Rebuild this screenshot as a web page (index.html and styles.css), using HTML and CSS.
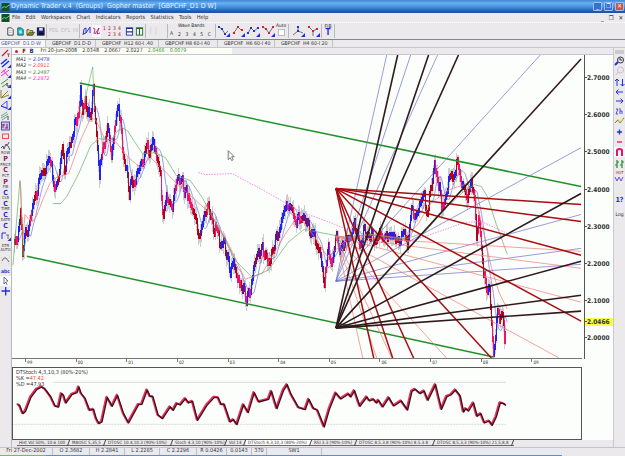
FILE: index.html
```
<!DOCTYPE html>
<html lang="en">
<head>
  <meta charset="UTF-8">
  <title>Dynamic Trader v.4</title>
  <link rel="stylesheet" href="styles.css">
</head>
<body>
  <div class="titlebar">
    <svg class="logo" viewBox="0 0 9 9"><rect width="9" height="9" fill="#12502c"/><path d="M0 6L3 4L5 5L9 2" stroke="#7fe06a" fill="none"/></svg>
    <span class="title">Dynamic Trader v.4 &nbsp;(Groups) &nbsp;Gopher master &nbsp;[GBPCHF_D1 D W]</span>
    <div class="win-buttons">
      <span class="win">_</span><span class="win">❐</span><span class="win win-close">✕</span>
    </div>
  </div>

  <div class="menubar">
    <svg class="logo" viewBox="0 0 9 9"><rect width="9" height="9" fill="#12502c"/><path d="M0 6L3 4L5 5L9 2" stroke="#7fe06a" fill="none"/></svg>
    <nav class="menu">
      <span>File</span><span>Edit</span><span>Workspaces</span><span>Chart</span><span>Indicators</span><span>Reports</span><span>Statistics</span><span>Tools</span><span>Help</span>
    </nav>
    <div class="mdi-buttons"><span>_</span><span>❐</span><span>✕</span></div>
  </div>

  <div class="toolbar">
    <div class="group g-file">
      <svg viewBox="0 0 9 10"><path d="M1.5 1H5.500L7.500 3V9H1.500Z" fill="#fff" stroke="#333"/><path d="M3 4H6M3 6H6" stroke="#777" stroke-width=".6"/></svg>
      <svg viewBox="0 0 9 10"><path d="M1.500 1H5.500L7.500 3V9H1.500Z" fill="#19c5d5" stroke="#155"/><path d="M3 4L4 7L5 4L6 7" stroke="#fff" fill="none" stroke-width=".7"/></svg>
      <svg viewBox="0 0 9 10"><path d="M.5 9V3H3L4 4H7V9Z" fill="#dedc58" stroke="#333" stroke-width=".8"/><path d="M1 9L3 6H9L7 9Z" fill="#8b8a25" stroke="#222" stroke-width=".6"/></svg>
      <svg viewBox="0 0 9 10"><rect x="1" y="1" width="7.500" height="8" fill="#171c91" stroke="#112"/><rect x="3" y="1" width="4" height="3" fill="#dde"/><rect x="3" y="6" width="4" height="3" fill="#111"/></svg>
    </div>
    <div class="group g-text">PDL&ensp;DFL&ensp;HI</div>
    <div class="group g-pct">
      <svg viewBox="0 0 9 12"><path d="M1 10L2 4L4 3V8L1 9M4 8L8 2V8" stroke="#2434df" fill="none"/></svg>
      <svg class="pressed" viewBox="0 0 9 12"><path d="M1 3L3 4L2 9M3 9L7 3L5 9L8 8" stroke="#d02688" fill="none"/></svg>
    </div>
    <div class="counts"><span>1</span><span>2</span><span>3</span><span>4</span><span></span><span>2</span><span>3</span><span>4</span></div>
    <div class="group g-win">
      <svg viewBox="0 0 9 10"><rect x="1" y="1" width="7" height="8" fill="#fff" stroke="#1c2f9b"/><path d="M1 1.500H8M1 5.500H8" stroke="#1c2f9b" stroke-width="1.300"/></svg>
      <svg viewBox="0 0 9 10"><rect x="1" y="1" width="7" height="8" fill="#fff" stroke="#176a2c"/><path d="M1 1.500H8M4.500 1V9" stroke="#176a2c" stroke-width="1.300"/></svg>
    </div>
    <div class="group g-off">⌠&ensp;⌡</div>
    <div class="waves">
      <div class="waves-a">A</div>
      <div><div class="waves-title">Wave Bands</div><div class="waves-row"><span>2</span><span>3</span><span>4</span><span>5</span><span>C</span></div></div>
    </div>
    <div class="group g-tools">
      <svg viewBox="0 0 14 12"><path d="M2 2L5 4L8 9L11 6" class="ln"/><path class="bl" d="M1 1h2v2h-2zM4 3h2v2h-2zM7 8h2v2h-2z"/><path class="cr" d="M13 8V12H9Z"/></svg>
      <svg viewBox="0 0 14 12"><path d="M1 9L6 2L10 6" class="ln"/><path class="rd" d="M1 7h2v2h-2zM5 1h2v2h-2zM9 4h2v2h-2z"/><path class="cr" d="M13 8V12H9Z"/></svg>
      <svg viewBox="0 0 14 12"><path d="M1 8L4 3L7 6L11 3" class="ln"/><path class="bl" d="M0 7h2v2h-2zM3 2h2v2h-2zM6 5h2v2h-2zM10 2h2v2h-2z"/><path class="cr" d="M13 8V12H9Z"/></svg>
      <svg viewBox="0 0 14 12"><path d="M1 2L4 4L7 8L11 2" class="ln"/><path class="rd" d="M0 1h2v2h-2zM3 3h2v2h-2zM6 7h2v2h-2zM10 1h2v2h-2z"/><path class="cr" d="M13 8V12H9Z"/></svg>
    </div>
    <div class="auto">Auto<span class="check"></span></div>
    <div class="group g-fork">
      <svg viewBox="0 0 14 12"><path d="M6 1V6L1 10M6 6L11 8" class="ln"/><path class="bl" d="M5 1h2v2h-2zM5 5h2v2h-2z"/><path class="cr" d="M13 8V12H9Z"/></svg>
      <svg viewBox="0 0 14 12"><path d="M2 2L6 6L10 4M6 6V11" class="ln"/><path class="rd" d="M1 1h2v2h-2zM5 5h2v2h-2zM9 3h2v2h-2z"/><path class="cr" d="M13 8V12H9Z"/></svg>
    </div>
    <div class="fib">FIB<b>T</b></div>
  </div>

  <div class="chart-tabs">
    <span class="active">GBPCHF&nbsp; D1 D-W</span><span>GBPCHF&nbsp; D1 D-D</span><span>GBPCHF&nbsp; H12 60-I .40</span><span>GBPCHF H8 60-I 40</span><span>GBPCHF&nbsp; H6 60-I 40</span><span>GBPCHF&nbsp; H4 60-I 20</span>
  </div>

  <div class="main">
    <aside class="left-tools" id="leftTools"></aside>

    <section class="center">
      <div class="info">
        <div class="quote"><i class="dot"></i><b class="f">F</b><b class="r">B</b><span>Fri 20-Jun-2008</span><span>2.0348</span><span>2.0667</span><span>2.0227</span><span class="close">2.0466</span><span class="close">0.0079</span></div>
      </div>
      <div class="plot">
        <svg class="chart" id="chart" viewBox="12 55 570 304"></svg>
        <div class="ma">
          <div>MA1 = <span class="c1">2.0478</span></div>
          <div>MA2 = <span class="c2">2.0911</span></div>
          <div>MA3 = <span class="c3">2.2487</span></div>
          <div>MA4 = <span class="c4">2.2872</span></div>
        </div>
        <div class="prices">
          <span>2.7000</span><span>2.6000</span><span>2.5000</span><span>2.4000</span><span>2.3000</span><span>2.2000</span><span>2.1000</span><span>2.0000</span>
          <b class="last">2.0466</b>
        </div>
      </div>
      <div class="years"><span>99</span><span>00</span><span>01</span><span>02</span><span>03</span><span>04</span><span>05</span><span>06</span><span>07</span><span>08</span><span>09</span></div>
      <div class="stoch">
        <svg id="stoch" viewBox="39 39 1704 213" preserveAspectRatio="none"></svg>
        <div class="stoch-text">
          <div>DTStoch 4,3,10,3 (80%-20%)</div>
          <div>%K =<span class="c2">47.42</span></div>
          <div>%D =47.93</div>
        </div>
      </div>
      <div class="study-tabs">
        <span>Hist Vol 50%, 10:6 100</span><span>MAOSC 5,35,5</span><span>DTOSC 10.4,10.3 (90%-10%)</span><span>Stoch 4.3,10 (90%-10%)</span><span>Vol 14</span><span class="active">DTStoch 4,3,10,3 (80%-20%)</span><span>RSI 3.3 (90%-10%)</span><span>DTOSC 8.5.3.8 (90%-10%) 8.5.3.8</span><span>DTOSC 8,5,3,3 (90%-10%) 21,5,8,8</span>
      </div>
    </section>

    <aside class="right-tools" id="rightTools"></aside>
  </div>

  <div class="status">
    <span>Fri 27-Dec-2002</span><span>O 2.3682</span><span>H 2.2841</span><span>L 2.2285</span><span>C 2.2296</span><span>R 0.0426</span><span>0.0143</span><span class="key">370</span><span>SW1</span>
  </div>
  <div class="taskbar"><i class="start"></i><i class="tasks"></i></div>

  <script src="chart.js"></script>
</body>
</html>
```
FILE: styles.css
```
* {
  box-sizing: border-box;
}

body {
  margin: 0;
  width: 625px;
  height: 456px;
  overflow: hidden;
  display: flex;
  flex-direction: column;
  background: #ebe9eb;
  font-family: "DejaVu Sans Condensed", "DejaVu Sans", sans-serif;
  font-size: 6px;
  line-height: 1;
  color: #333;
  white-space: nowrap;
}

svg {
  display: block;
  flex: none;
}

.titlebar {
  height: 13px;
  flex: none;
  display: flex;
  align-items: center;
  padding: 0 1px;
  background: linear-gradient(#3f86d8, #69b0ef 25%, #3b86d8 60%, #2456ae 88%, #2450a0);
}

.logo {
  width: 9px;
  height: 8px;
}

.title {
  margin-left: 1px;
  color: #e4f0ff;
  font-size: 7px;
  flex: 1;
}

.win-buttons {
  display: flex;
  gap: 2px;
}

.win {
  width: 9px;
  height: 9px;
  border: 1px solid #9cc3ef;
  border-radius: 1px;
  background: #3472cf;
  color: #fff;
  font-size: 6px;
  text-align: center;
}

.win-close {
  background: #d9523d;
}

.menubar {
  height: 10px;
  flex: none;
  display: flex;
  align-items: center;
  padding: 0 2px 0 1px;
  border-bottom: 1px dotted #fff;
}

.menu {
  display: flex;
  gap: 5.4px;
  margin-left: 2px;
  flex: 1;
  font-size: 5.6px;
}

.mdi-buttons {
  display: flex;
  gap: 5px;
}

.toolbar {
  height: 17px;
  flex: none;
  display: flex;
  align-items: center;
  border-bottom: 1px solid #7d8a88;
}

.toolbar > div {
  flex: none;
}

.group {
  display: flex;
  align-items: center;
  height: 14px;
  border-right: 1px solid #bbb9bb;
}

.g-file {
  width: 47px;
  padding-left: 6px;
  gap: 1px;
}

.g-file svg,
.g-win svg {
  width: 9px;
  height: 9px;
}

.g-text {
  width: 33px;
  padding-left: 2px;
  font-size: 5.5px;
  color: #bfbcbf;
}

.g-pct {
  width: 22px;
  gap: 1px;
  padding-left: 2px;
  border: 0;
}

.g-pct svg {
  width: 9px;
  height: 12px;
}

.pressed {
  background: #fbf8fa;
}

.counts {
  width: 22px;
  display: grid;
  grid-template-columns: repeat(4, 5px);
  row-gap: 1px;
  font-size: 5px;
  color: #a02030;
  text-align: center;
}

.g-win {
  width: 22px;
  gap: 1px;
  padding-left: 1px;
}

.g-off {
  width: 22px;
  color: #bcc;
  padding-left: 3px;
}

.waves {
  width: 48px;
  display: flex;
  align-items: flex-end;
  font-size: 5px;
  border-right: 1px solid #bbb9bb;
}

.waves-a {
  width: 7px;
  padding: 0 0 2px 2px;
}

.waves-title {
  padding-left: 3px;
  font-size: 4.8px;
  color: #222;
}

.waves-row {
  display: flex;
  width: 36px;
  justify-content: space-between;
  padding: 3px 0 1px 3px;
}

.g-tools {
  width: 60px;
  border: 0;
  gap: 1px;
  padding-left: 1px;
}

.g-tools svg,
.g-fork svg {
  width: 14px;
  height: 12px;
}

.ln {
  fill: none;
  stroke: #555;
  stroke-width: 0.8;
}

.bl,
.cr {
  fill: #1f2fe0;
}

.rd {
  fill: #d22436;
}

.auto {
  width: 13px;
  height: 14px;
  font-size: 4.8px;
  color: #222;
  border-right: 1px solid #bbb9bb;
}

.check {
  display: block;
  width: 7px;
  height: 7px;
  margin-left: 2px;
  background: #fff;
  border: 1px solid #bbb;
}

.g-fork {
  width: 33px;
  gap: 1px;
  padding-left: 3px;
}

.fib {
  width: 13px;
  height: 14px;
  border-right: 1px solid #bbb9bb;
  text-align: center;
  font-size: 5px;
}

.fib b {
  display: block;
  font-size: 8px;
  color: #1f2fe0;
}

.chart-tabs {
  height: 8px;
  flex: none;
  display: grid;
  grid-template-columns: 46px 50px 63px 59px 57px 58px;
  border-bottom: 1px solid #c9c6cb;
  font-size: 5.2px;
}

.chart-tabs span {
  padding: 1px 0 0 6px;
  border-right: 1px solid #c4c1c6;
}

.chart-tabs .active {
  padding-left: 1px;
  color: #4a5a9c;
  background: #f7f6f9;
}

.main {
  height: 399px;
  flex: none;
  display: flex;
}

.left-tools {
  width: 12px;
  border-right: 1px solid #b9b8c6;
  display: flex;
  flex-direction: column;
}

.center {
  width: 601px;
  display: flex;
  flex-direction: column;
  background: #fcfefb;
}

.info {
  height: 7px;
  flex: none;
  background: #ebe9eb;
  border-bottom: 1px solid #c7c5d0;
}

.quote {
  width: 220px;
  height: 6px;
  display: flex;
  align-items: center;
  gap: 5.2px;
  padding-left: 3px;
  background: #fcfef4;
  font-size: 5.3px;
}

.quote b {
  width: 5px;
  margin-right: -3px;
  font-size: 6px;
}

.quote b.r {
  margin-right: 1px;
}

.dot {
  width: 3px;
  height: 3px;
  border-radius: 50%;
  background: #e3124a;
  margin-right: -1px;
}

.f {
  color: #7b1414;
}

.r {
  color: #1c2ba0;
}

.close {
  color: #3f8f3f;
}

.plot {
  height: 304px;
  flex: none;
  display: flex;
  position: relative;
}

.chart {
  width: 570px;
  height: 304px;
  border-bottom: 1px solid #777;
}

.ma {
  position: absolute;
  left: 4px;
  top: 1px;
  font-size: 5.2px;
  line-height: 6.4px;
  font-style: italic;
}

.c1 { color: #3445d8; }
.c2 { color: #f04545; }
.c3 { color: #3d963d; }
.c4 { color: #ee3be0; }

.prices {
  width: 29px;
  border-left: 1px solid #555;
  margin-left: 2px;
  padding-top: 5px;
  display: flex;
  flex-direction: column;
  position: relative;
  font-size: 6.5px;
  font-weight: bold;
}

.prices span {
  height: 37.2px;
  line-height: 37.2px;
}

.prices span::before,
.last::before {
  content: "";
  display: inline-block;
  width: 2px;
  height: 1px;
  background: #555;
  vertical-align: 2px;
}

.last {
  position: absolute;
  left: 0;
  top: 263px;
  width: 28px;
  height: 8px;
  line-height: 8px;
  background: #fafa50;
}

.years {
  width: 570px;
  height: 8px;
  flex: none;
  display: flex;
  padding-left: 13px;
  font-size: 4.6px;
}

.years span {
  width: 50.800px;
  height: 3px;
  padding: 2px 0 0 1px;
  border-left: 1px solid #777;
}

.stoch {
  width: 570px;
  height: 73px;
  flex: none;
  position: relative;
  border: 1px solid #555;
}

.stoch svg {
  width: 568px;
  height: 71px;
}

.stoch-text {
  position: absolute;
  left: 3px;
  top: 1px;
  font-size: 5.5px;
  line-height: 6.2px;
}

.stoch-text div {
  width: max-content;
}

.study-tabs {
  height: 7px;
  flex: none;
  display: grid;
  grid-template-columns: 53px 36px 67px 54px 19px 66px 45px 78px 79px;
  padding-left: 5px;
  background: #ebe9eb;
  width: 601px;
  font-size: 4.5px;
}

.study-tabs span {
  position: relative;
  padding: 1px 0 0 2px;
  height: 6px;
  border-bottom: 1px solid #666;
}

.study-tabs span::after {
  content: "";
  position: absolute;
  right: 1px;
  top: 0;
  height: 6px;
  border-right: 1px solid #444;
  transform: skewX(-20deg);
}

.study-tabs .active {
  background: #fff;
}

.right-tools {
  width: 12px;
  border-left: 1px solid #c9c7d2;
  display: flex;
  flex-direction: column;
}

.tool {
  flex: none;
  display: flex;
  flex-direction: column;
  align-items: center;
  justify-content: center;
}

.tool svg {
  width: 11px;
  height: 10px;
}

.tool small {
  font-size: 4px;
  line-height: 4.500px;
  color: #333;
}

.tool small.hot {
  color: #8f2020;
  line-height: 5px;
}

.tool small.log {
  font-size: 5px;
  line-height: 6px;
}

.tool b {
  font-size: 7px;
  line-height: 6.500px;
  color: #1f2fe0;
}

.tool b.abc {
  font-size: 5px;
}

.tool .p { color: #8f1d62; }

.status {
  height: 8px;
  flex: none;
  display: grid;
  grid-template-columns: 53px 37px 35px 35px 37px 30px 25px 15px 55px;
  font-size: 5.500px;
  border-top: 1px solid #c5c3c8;
}

.status span {
  text-align: center;
  border-right: 1px solid #c0bec4;
}

.taskbar {
  height: 1px;
  flex: none;
  display: flex;
}

.start {
  width: 46px;
  background: #72b878;
}

.tasks {
  width: 516px;
  background: #4c92e4;
}
```
FILE: chart.js
```
const NS = 'http://www.w3.org/2000/svg';

function add(svg, tag, attrs) {
  const el = document.createElementNS(NS, tag);
  for (const key in attrs) el.setAttribute(key, attrs[key]);
  svg.appendChild(el);
}

function line(svg, pts, color, width, extra) {
  add(svg, 'polyline', Object.assign({ points: pts.join(' '), fill: 'none', stroke: color, 'stroke-width': width }, extra));
}

// fixed seed so the bars are the same on every load
let seed = 11;
function rnd() {
  seed = (seed * 16807) % 2147483647;
  return seed / 2147483647;
}

const chart = document.getElementById('chart');

const price = [[13,250],[16,240],[19,218],[21,250],[24,232],[26,234],[30,214],[35,194],[39,178],[42,170],[46,164],[50,168],[53,188],[57,180],[61,150],[63,168],[67,155],[71,134],[75,125],[77,110],[79,88],[81,118],[84,98],[88,118],[92,94],[95,130],[98,171],[102,150],[106,120],[110,150],[113,130],[117,106],[120,138],[125,170],[128,192],[133,178],[139,164],[143,155],[147,136],[149,156],[152,136],[156,162],[160,180],[163,222],[166,198],[172,210],[176,184],[182,178],[185,196],[188,190],[193,212],[199,235],[205,214],[209,206],[213,226],[218,238],[224,245],[230,270],[233,262],[237,286],[240,280],[246,300],[250,288],[256,264],[262,248],[267,262],[273,248],[280,228],[286,205],[290,208],[296,225],[302,214],[308,228],[314,240],[319,255],[324,280],[328,250],[331,260],[336,238],[339,256],[345,236],[350,240],[354,222],[358,245],[365,232],[372,240],[378,232],[382,244],[388,230],[394,242],[400,236],[407,241],[410,214],[414,216],[418,206],[424,198],[427,212],[431,188],[434,166],[437,176],[441,208],[446,190],[452,178],[459,164],[463,186],[468,200],[472,188],[475,194],[477,232],[479,218],[481,228],[484,270],[486,284],[490,290],[492,322],[494,352],[499,308],[501,325],[503,318],[505,335],[507,322]];

// bars: grey range, then the coloured body
const close = [];
let noise = 0;
for (let i = 1; i < price.length; i++) {
  const [x0, y0] = price[i - 1], [x1, y1] = price[i];
  for (let x = x0; x < x1; x++) {
    if (x % 2) noise = (rnd() - 0.5) * 14;
    close.push([x, y0 + (y1 - y0) * (x - x0) / (x1 - x0) + noise]);
  }
}
const crisp = { 'shape-rendering': 'crispEdges' };
close.forEach(([x, y], i) => {
  const prev = i ? close[i - 1][1] : y;
  const top = Math.min(y, prev) - 3 - rnd() * 8;
  line(chart, [[x + 0.5, top], [x + 0.5, Math.max(y, prev) + 3 + rnd() * 8]], '#cccdcc', 1, crisp);
});

// moving averages
const avg = close.map(([x], i) => {
  const part = close.slice(Math.max(0, i - 7), i + 1);
  return [x + 2, part.reduce((s, p) => s + p[1], 0) / part.length];
});
line(chart, avg, '#5560d8', 0.6);

let color = '#2020f4';
close.forEach(([x, y], i) => {
  const prev = i ? close[i - 1][1] : y;
  if (x % 2) color = y < prev && rnd() < 0.75 ? '#2020f4' : ['#b0001c', '#f2106e', '#2020f4'][Math.floor(rnd() * 2.2)];
  line(chart, [[x + 0.5, Math.min(y, prev) - 3], [x + 0.5, Math.max(y, prev) + 3]], color, 1, crisp);
});

line(chart, [[12,266],[19,181],[20,190],[22,257],[25,240]], '#60a868', 0.7);
line(chart, [[19,182],[22,240],[24,215],[28,220],[32,222],[36,216],[42,200],[49,184],[55,178],[68,174],[80,140],[90,118],[95,120],[105,141],[115,142],[128,158],[140,168],[150,158],[165,172],[176,184],[190,196],[210,214],[228,244],[245,280],[262,274],[285,235],[298,216],[315,238],[328,258],[345,242],[370,235],[405,239],[418,225],[432,203],[450,190],[468,184],[476,198],[484,232],[492,268],[500,294],[508,310]], '#f27a74', 0.7);
line(chart, [[52,204],[60,204],[66,197],[78,174],[90,146],[98,139],[111,140],[117,131],[122,128],[127,131],[134,142],[142,154],[155,153],[165,158],[176,176],[190,181],[202,198],[220,232],[236,262],[252,278],[268,271],[288,243],[304,230],[325,234],[345,238],[370,235],[405,240],[425,233],[445,210],[463,193],[475,185],[482,187],[488,197],[497,225],[508,255]], '#65aa6c', 0.7);
line(chart, [[80,118],[92,67],[94,110]], '#60a868', 0.6);
line(chart, [[198,173],[205,175],[232,174],[245,181],[260,189],[278,199],[300,212],[330,223],[352,232],[380,238],[410,242],[440,232],[465,223],[482,222],[508,234]], '#f070dc', 0.8, { 'stroke-dasharray': '1.5 1.2' });

// trend channel
line(chart, [[79,83],[582,187]], '#23902a', 1.5);
line(chart, [[26,257],[494,358]], '#23902a', 1.5);

// fans
function fan(from, ends, color, width) {
  ends.forEach(end => line(chart, [from, end], color, width));
}
fan([336,282], [[387,55],[411,55],[438,55],[541,55],[582,148],[582,215],[582,249],[582,265]], '#6c72c8', 0.7);
fan([336,237], [[363,359],[377,359],[392,359],[447,359],[560,359],[582,303],[582,269],[582,252]], '#f27a74', 0.7);
fan([336,189], [[374,359],[393,359],[414,359],[492,359],[582,322],[582,256],[582,222],[582,205]], '#a80d12', 1.5);
fan([336,329], [[398,55],[429,55],[459,55],[582,59],[582,194],[582,262],[582,296],[582,312]], '#30191c', 1.6);

add(chart, 'path', { d: 'M228 151V160L230 158L231.500 161L233 160L231.500 157H234Z', fill: '#fff', stroke: '#444', 'stroke-width': 0.7 });

// stochastic
const osc = [[52,148],[58,150],[68,175],[76,168],[92,126],[110,102],[125,95],[135,102],[152,125],[165,153],[175,155],[184,115],[190,120],[197,143],[215,118],[230,112],[236,95],[243,115],[255,130],[268,165],[280,162],[288,190],[296,205],[305,200],[321,126],[336,153],[352,120],[370,175],[385,203],[415,148],[425,147],[441,104],[450,124],[458,124],[474,180],[487,190],[510,155],[519,165],[530,145],[540,149],[556,130],[565,143],[577,138],[592,195],[620,150],[642,126],[654,127],[663,148],[672,147],[690,200],[700,193],[710,208],[730,148],[744,172],[762,112],[776,140],[805,132],[814,108],[830,160],[850,105],[861,88],[873,118],[895,157],[915,163],[926,132],[940,160],[952,165],[972,215],[988,160],[1007,113],[1022,131],[1045,116],[1052,125],[1063,106],[1079,153],[1100,125],[1108,137],[1120,132],[1129,143],[1135,135],[1148,155],[1166,127],[1181,152],[1203,137],[1222,164],[1235,108],[1245,102],[1260,115],[1272,107],[1283,135],[1306,88],[1324,162],[1340,124],[1352,119],[1366,104],[1380,122],[1390,170],[1397,160],[1405,167],[1420,143],[1431,183],[1442,175],[1453,203],[1467,197],[1476,210],[1488,185],[1500,143],[1510,145],[1517,150]];
const stoch = document.getElementById('stoch');
line(stoch, [[160,82],[1517,82]], '#c4c8c4', 2);
line(stoch, [[37,208],[1517,208]], '#c4c8c4', 2, { 'stroke-dasharray': '6 3' });
line(stoch, osc.map(([x, y]) => [x - 2, y - 1]), '#ee2d5c', 6, { 'stroke-linejoin': 'round' });
line(stoch, osc.map(([x, y]) => [x + 1, y + 1]), '#3d1219', 4, { 'stroke-linejoin': 'round' });

// side toolbars: [height, content]
const icon = body => `<svg viewBox="0 0 11 10" fill="none" stroke="#1f2fe0">${body}</svg>`;
const corner = '<path d="M11 6.500V10H7.500Z" fill="#1f2fe0" stroke="none"/>';
const label = (text, letter, cls) => `<small>${text}</small><b class="${cls || ''}">${letter}</b>`;

const left = [
  [9, icon('<path d="M2 8L8 2" stroke="#d02030" stroke-width="1.300"/><path d="M7 6H10M8.500 6V9" stroke="#a33" stroke-width=".8"/>')],
  [11, icon('<path d="M1 6L7 1M2 9L9 3" stroke-width="1.500"/>' + corner)],
  [10, icon('<path d="M1 5L6 1M1 8L9 2M3 2L8 8" stroke="#ea35d8"/>' + corner)],
  [10, icon('<path d="M1 6L8 1M2 9L8 5" stroke="#3d963d"/><path d="M7 5V8H10" stroke="#444"/>' + corner)],
  [11, icon('<path d="M1 9V1M1 9L8 2M1 9L9 6" stroke="#8c8230"/>' + corner)],
  [12, icon('<path d="M1 6L7 1V8L1 6L8 9" stroke-width=".8"/>' + corner)],
  [10, icon('<path d="M1 5L7 1M1 7L8 3M2 9L8 5" stroke="#579574" stroke-width=".8"/><path d="M8 5V9" stroke="#555"/>')],
  [9, icon('<rect x="1.500" y="1" width="8" height="8" fill="#c8c6e8" stroke="#45a"/><path d="M3 3V7M3 4H5M7 3V7M5 7H8" stroke="#8f1d62"/>')],
  [11, icon('<rect x="2.500" y="3" width="6" height="4.500" stroke="#e85050"/>')],
  [10, icon('<path d="M1 7L3 5L4 8L6 3L7 5L9 1M8 5L10 9" stroke="#445" stroke-width=".9"/>')],
  [11, label('ROW', 'P', 'p')],
  [12, label('PRICE', 'C', 'p')],
  [11, label('PCT', 'P', 'p')],
  [11, label('FIB', 'C')],
  [11, label('CLB', 'C')],
  [11, label('TIME', 'C')],
  [11, label('DATE', 'C')],
  [13, icon('<path d="M2 8V2H6" /><path d="M6 4H9M8 4V8" stroke="#555" stroke-width=".8"/>' + corner)],
  [12, '<small>DTR</small><small>AUTO</small>'],
  [12, icon('<path d="M2 6L4 3H6L9 7" stroke="#668"/><path d="M1 3h1M9 2h1M1 8h1M8 9h1" stroke="#e8df40"/>')],
  [10, '<b class="abc">abc</b>'],
  [9, icon('<rect width="11" height="10" fill="#fafafa" stroke="none"/><path d="M4 1V8L6 6L7 9M4 1L8 5H6" stroke="#557" stroke-width=".8"/>')],
  [12, icon('<path d="M1.500 5H10M5.700 1V9.500" stroke-width="1.300"/>')]
];

const right = [
  [7, icon('<path d="M1 4H10M1 6H10" stroke="#aaa"/>')],
  [11, icon('<circle cx="6.500" cy="4" r="3" stroke="#334"/><path d="M4 6L1 9" stroke-width="2"/><path d="M6 2V4H8" stroke="#334"/>')],
  [10, icon('<circle cx="6.500" cy="4" r="3" stroke="#c5c3c8"/><path d="M4 6L2 9" stroke="#c5c3c8"/>')],
  [11, icon('<path d="M3 9V2M1 4L3 2L5 4M8.500 2V9M6.500 7L8.500 9L10.500 7"/>')],
  [9, icon('<path d="M9 5H2M4.500 2.500L2 5L4.500 7.500"/>')],
  [10, icon('<path d="M2 5H9M6.500 2.500L9 5L6.500 7.500"/>')],
  [10, icon('<path d="M2 3H4L2 8H4M6 2V8M6 5H8V8" stroke-width=".8"/>')],
  [10, icon('<path d="M1 7L4 4L6 7L10 2" stroke="#777"/><path d="M1 6L4 3L6 6L10 1" stroke="#ece23c"/>')],
  [11, icon('<path d="M3 5H8M5.500 2.500V7.500" stroke-width="1.300"/>')],
  [9, icon('<path d="M3 5H8" stroke="#e3126a" stroke-width="1.300"/>')],
  [12, icon('<rect width="11" height="10" fill="#fafafa" stroke="none"/><path d="M3 9V3.500Q3 2 5.500 2Q8 2 8 3.500V9" stroke="#e3126a" stroke-width="2"/>')],
  [11, icon('<path d="M3 1V9M1 6H3M3 3H5M8 1V9M6 6H8M8 3H10" stroke="#238a2e" stroke-width="1.200"/>')],
  [17, '<small class="hot">HOT</small>' + icon('<path d="M1 2L3 6L5 2L7 6L9 2" stroke="#6a50d8"/>')],
  [5, ''],
  [19, '<b>1?</b>'],
  [8, '<small class="log">Log</small>']
];

function fill(id, items) {
  document.getElementById(id).innerHTML = items.map(([h, html]) => `<div class="tool" style="height:${h}px">${html}</div>`).join('');
}
fill('leftTools', left);
fill('rightTools', right);
```
